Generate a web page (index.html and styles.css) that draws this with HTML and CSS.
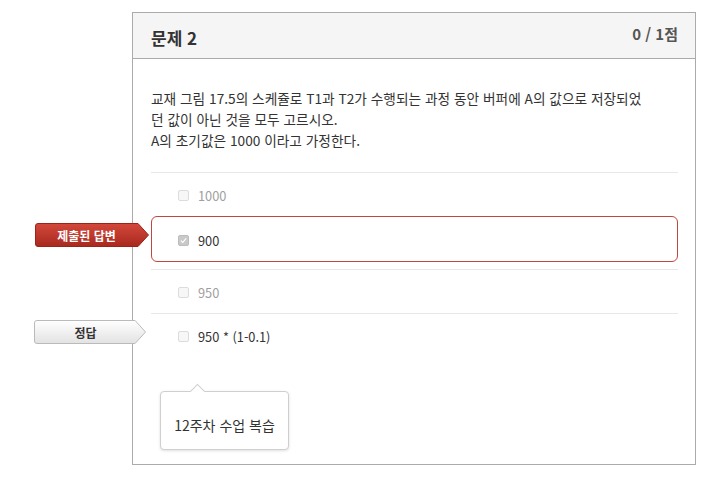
FILE: index.html
```html
<!DOCTYPE html>
<html lang="ko">
<head>
    <meta charset="UTF-8">
    <meta name="viewport" content="width=device-width, initial-scale=1.0">
    <title>문제 2</title>
    <link rel="stylesheet" href="styles.css">
</head>
<body>
    <div class="quiz">
        <div class="quiz-head">
            <h2>문제 2</h2>
            <span class="score">0 / 1점</span>
        </div>

        <div class="quiz-body">
            <p class="question">교재 그림 17.5의 스케쥴로 T1과 T2가 수행되는 과정 동안 버퍼에 A의 값으로 저장되었던 값이 아닌 것을 모두 고르시오.<br>A의 초기값은 1000 이라고 가정한다.</p>

            <ul class="answers">
                <li class="answer muted">
                    <span class="box"></span>1000
                </li>
                <li class="answer picked">
                    <span class="flag flag-red">
                        <svg viewBox="0 0 114 24" preserveAspectRatio="none">
                            <defs>
                                <linearGradient id="redFill" x1="0" y1="0" x2="0" y2="1">
                                    <stop offset="0" stop-color="#d4483b"/>
                                    <stop offset="1" stop-color="#a8291f"/>
                                </linearGradient>
                            </defs>
                            <path d="M3 0.5 H103 L113.5 12 L103 23.5 H3 Q0.5 23.5 0.5 21 V3 Q0.5 0.5 3 0.5 Z" fill="url(#redFill)" stroke="#9a2419"/>
                        </svg>
                        <span class="flag-text">제출된 답변</span>
                    </span>
                    <span class="box checked">
                        <svg viewBox="0 0 12 12"><path d="M2.5 6.2 L5 8.6 L9.6 3.2" fill="none" stroke="#fff" stroke-width="1.4"/></svg>
                    </span>900
                </li>
                <li class="answer muted">
                    <span class="box"></span>950
                </li>
                <li class="answer">
                    <span class="flag flag-grey">
                        <svg viewBox="0 0 114 24" preserveAspectRatio="none">
                            <defs>
                                <linearGradient id="greyFill" x1="0" y1="0" x2="0" y2="1">
                                    <stop offset="0" stop-color="#ffffff"/>
                                    <stop offset="1" stop-color="#e2e2e2"/>
                                </linearGradient>
                            </defs>
                            <path d="M3 0.5 H102 L112.5 12 L102 23.5 H3 Q0.5 23.5 0.5 21 V3 Q0.5 0.5 3 0.5 Z" fill="url(#greyFill)" stroke="#b9b9b9"/>
                        </svg>
                        <span class="flag-text">정답</span>
                    </span>
                    <span class="box"></span>950 * (1-0.1)
                </li>
            </ul>

            <div class="hint">12주차 수업 복습</div>
        </div>
    </div>
</body>
</html>
```

FILE: styles.css
```css
* { margin: 0; padding: 0; box-sizing: border-box; }
body { font-family: "Noto Sans CJK KR", "Noto Sans", sans-serif; color: #333; background: #fff; }

.quiz { width: 564px; margin: 12px 0 0 132px; border: 1px solid #ababab; background: #fff; }
.quiz-head { display: flex; justify-content: space-between; align-items: flex-start; height: 46px; padding: 0 17px 0 18px; background: #f5f5f5; border-bottom: 1px solid #ababab; }
.quiz-head h2 { font-size: 17px; font-weight: 700; line-height: 24px; margin-top: 13px; color: #333; }
.score { font-size: 15px; font-weight: 700; line-height: 20px; margin-top: 11px; color: #555; }

.quiz-body { padding: 29px 17px 14px 18px; }
.question { max-width: 500px; font-size: 13.7px; line-height: 21px; color: #333; }

.answers { list-style: none; margin-top: 21px; }
.answer { position: relative; display: flex; align-items: center; height: 44px; padding: 2px 0 0 27px; border-top: 1px solid #e8e8e8; font-size: 12.8px; color: #333; }
.answer.muted { color: #a0a0a0; }
.answer.picked { height: 46px; padding-left: 26px; border: 1px solid #c0473b; border-radius: 6px; margin-bottom: 7px; }
.answer.picked + .answer { border-top: 1px solid #e8e8e8; }

.box { display: inline-block; width: 11px; height: 11px; margin-right: 9px; border: 1px solid #dcdcdc; border-radius: 2px; background: #f7f7f7; }
.box.checked { background: #c9c9c9; border-color: #bdbdbd; }
.box svg { display: block; width: 9px; height: 9px; }

/* result flags hanging off the left edge of the card */
.flag { position: absolute; left: -117px; top: 6px; width: 114px; height: 24px; display: flex; align-items: center; }
.flag-grey { left: -117px; width: 113px; }
.flag svg { position: absolute; left: 0; top: 0; width: 100%; height: 100%; }
.flag-text { position: relative; width: 103px; text-align: center; font-size: 12px; font-weight: 700; }
.flag-red .flag-text { color: #fff; }
.flag-grey .flag-text { color: #333; }

.hint { position: relative; width: 129px; height: 59px; margin: 34px 0 0 9px; padding-top: 23px; border: 1px solid #cfcfcf; border-radius: 4px; background: #fff; box-shadow: 0 1px 3px rgba(0, 0, 0, 0.12); text-align: center; font-size: 14px; line-height: 20px; color: #333; }
.hint::before { content: ""; position: absolute; left: 31px; top: -6px; width: 10px; height: 10px; background: #fff; border-left: 1px solid #cfcfcf; border-top: 1px solid #cfcfcf; transform: rotate(45deg); }
```
